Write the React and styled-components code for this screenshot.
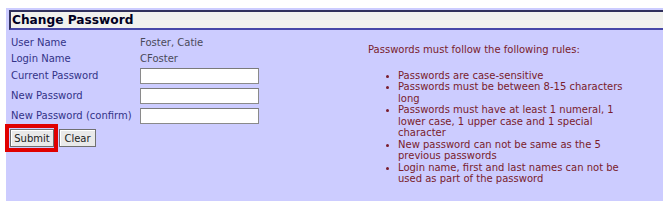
import React from 'react'
import styled, { createGlobalStyle } from 'styled-components'

const GlobalStyle = createGlobalStyle`
  body {
    margin: 0;
    background: #ffffff;
    font-family: "DejaVu Sans", Verdana, sans-serif;
  }
`

const Panel = styled.div`
  margin: 8px 0 0 6px;
  width: 657px;
  height: 193px;
  background: #ccccff;
  box-sizing: border-box;
  padding-top: 2px;
`

const Header = styled.div`
  margin-left: 3px;
  height: 16px;
  line-height: 16px;
  background: #f1f1ee;
  border-top: 2px solid #30305c;
  border-left: 2px solid #30305c;
  border-bottom: 2px solid #4848a8;
  padding-left: 1px;
  font-size: 12.2px;
  font-weight: bold;
  color: #000022;
`

const Body = styled.div`
  display: flex;
  padding: 4.5px 0 0 5px;
`

const Form = styled.div`
  width: 357px;
  display: flex;
  flex-direction: column;
`

const Row = styled.div`
  display: flex;
  align-items: flex-start;
  height: ${props => props.height || '20px'};
`

const Label = styled.div`
  width: 129px;
  font-size: 10px;
  line-height: 16px;
  color: #333388;
  white-space: nowrap;
`

const Value = styled.div`
  font-size: 10px;
  line-height: 16px;
  color: #4a4a5a;
`

const Input = styled.input`
  width: 119px;
  height: 16px;
  box-sizing: border-box;
  margin: 0;
  padding: 0 2px;
  border: 1px solid #8a8a8a;
  border-top-color: #7a7a7a;
  background: #ffffff;
  font-size: 10px;
`

const Buttons = styled.div`
  display: flex;
  align-items: flex-start;
  margin-left: -6px;
  margin-top: -3.5px;
`

const Highlight = styled.div`
  border: 4px solid #e00000;
  padding: 1px 0 1px 1px;
  display: flex;
`

const Button = styled.button`
  height: 18px;
  width: ${props => props.width || '44px'};
  margin: 0;
  margin-top: ${props => props.offset || '0'};
  margin-left: ${props => props.gap || '0'};
  padding: 0;
  font-family: "DejaVu Sans", Verdana, sans-serif;
  font-size: 10px;
  color: #222222;
  background: #e9e9e9;
  border: 1px solid #707070;
  box-shadow: inset 1px 1px 0 #ffffff;
`

const Rules = styled.div`
  padding-top: 9.5px;
  width: 270px;
  color: #7a1c2c;
  font-size: 10px;
`

const Intro = styled.div`
  line-height: 12px;
`

const List = styled.ul`
  margin: 13.5px 0 0 0;
  padding-left: 30px;
  line-height: 11.5px;
  list-style: disc;

  li::marker {
    font-size: 9px;
  }
`

const rules = [
  'Passwords are case-sensitive',
  'Passwords must be between 8-15 characters long',
  'Passwords must have at least 1 numeral, 1 lower case, 1 upper case and 1 special character',
  'New password can not be same as the 5 previous passwords',
  'Login name, first and last names can not be used as part of the password',
]

export default function App() {
  return (
    <>
      <GlobalStyle />
      <Panel>
        <Header>Change Password</Header>
        <Body>
          <Form>
            <Row height="16.5px">
              <Label>User Name</Label>
              <Value>Foster, Catie</Value>
            </Row>
            <Row height="16.5px">
              <Label>Login Name</Label>
              <Value>CFoster</Value>
            </Row>
            <Row>
              <Label>Current Password</Label>
              <Input type="password" />
            </Row>
            <Row>
              <Label>New Password</Label>
              <Input type="password" />
            </Row>
            <Row>
              <Label>New Password (confirm)</Label>
              <Input type="password" />
            </Row>
            <Buttons>
              <Highlight>
                <Button>Submit</Button>
              </Highlight>
              <Button width="37px" gap="1px" offset="5px">Clear</Button>
            </Buttons>
          </Form>
          <Rules>
            <Intro>Passwords must follow the following rules:</Intro>
            <List>
              {rules.map(r => (
                <li key={r}>{r}</li>
              ))}
            </List>
          </Rules>
        </Body>
      </Panel>
    </>
  )
}
